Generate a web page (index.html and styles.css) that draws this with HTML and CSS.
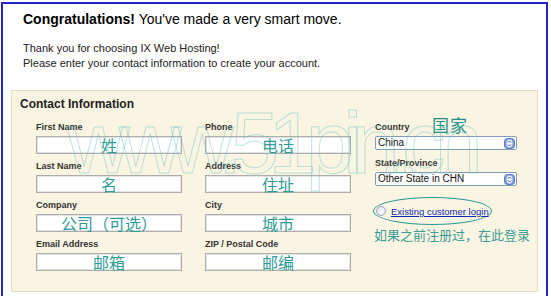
FILE: index.html
```html
<!DOCTYPE html>
<html lang="en">
<head>
    <meta charset="UTF-8">
    <title>Contact Information</title>
    <link rel="stylesheet" href="styles.css">
</head>
<body>

    <div class="page">
        <h1 class="title"><b>Congratulations!</b> You've made a very smart move.</h1>
        <p class="intro">Thank you for choosing IX Web Hosting!<br>Please enter your contact information to create your account.</p>

        <div class="panel">
            <h2>Contact Information</h2>
            <div class="form">
                <div class="col">
                    <div class="field"><label>First Name</label><div class="input">姓</div></div>
                    <div class="field"><label>Last Name</label><div class="input">名</div></div>
                    <div class="field"><label>Company</label><div class="input">公司（可选）</div></div>
                    <div class="field"><label>Email Address</label><div class="input">邮箱</div></div>
                </div>
                <div class="col">
                    <div class="field"><label>Phone</label><div class="input">电话</div></div>
                    <div class="field"><label>Address</label><div class="input">住址</div></div>
                    <div class="field"><label>City</label><div class="input">城市</div></div>
                    <div class="field"><label>ZIP / Postal Code</label><div class="input">邮编</div></div>
                </div>
                <div class="col side">
                    <div class="pick">
                        <label>Country <span class="note">国家</span></label>
                        <div class="select">
                            <span>China</span>
                            <svg width="11" height="11" viewBox="0 0 11 11"><rect x="0.5" y="0.5" width="10" height="10" rx="3" fill="#7d9be0" stroke="#5a78c0"/><ellipse cx="5.5" cy="5.5" rx="3" ry="4" fill="#eef3ff"/><path d="M4 4.5 L5.5 3 L7 4.5 M4 6.5 L5.5 8 L7 6.5" fill="none" stroke="#3b5ba8" stroke-width="1"/></svg>
                        </div>
                    </div>
                    <div class="pick">
                        <label>State/Province</label>
                        <div class="select">
                            <span>Other State in CHN</span>
                            <svg width="11" height="11" viewBox="0 0 11 11"><rect x="0.5" y="0.5" width="10" height="10" rx="3" fill="#7d9be0" stroke="#5a78c0"/><ellipse cx="5.5" cy="5.5" rx="3" ry="4" fill="#eef3ff"/><path d="M4 4.5 L5.5 3 L7 4.5 M4 6.5 L5.5 8 L7 6.5" fill="none" stroke="#3b5ba8" stroke-width="1"/></svg>
                        </div>
                    </div>
                    <div class="login">
                        <span class="ring"><span class="radio"></span><a href="#">Existing customer login</a></span>
                    </div>
                    <p class="hint">如果之前注册过，在此登录</p>
                </div>
            </div>
        </div>

        <div class="mark">www.51pin.cn</div>
    </div>

</body>
</html>
```

FILE: styles.css
```css
* {
    box-sizing: border-box;
}
body {
    font-family: 'Liberation Sans', Arial, sans-serif;
    background-color: white;
    margin: 0;
    padding: 0;
}
.page {
    position: relative;
    height: 300px;
    margin: 2px 3px 0 1px;
    border: 2px solid #2323c8;
    border-bottom: none;
    padding-top: 7px;
    overflow: hidden;
}
.title {
    margin: 0;
    padding-left: 20px;
    font-size: 14px;
    line-height: 16px;
    font-weight: normal;
    color: #000;
}
.intro {
    margin: 14px 0 0;
    padding-left: 20px;
    font-size: 11px;
    line-height: 15px;
    color: #222;
}
.panel {
    margin: 19px 8px 0;
    padding: 6px 8px 20px;
    background-color: #faf5e2;
    border: 1px solid #e6dfbf;
}
h2 {
    margin: 0;
    font-size: 12px;
    line-height: 14px;
    color: #222;
}
.form {
    display: grid;
    grid-template-columns: 169px 170px 142px;
    margin-top: 10px;
    padding-left: 16px;
}
.col {
    display: flex;
    flex-direction: column;
    gap: 6px;
}
label {
    display: block;
    position: relative;
    font-size: 9px;
    line-height: 12px;
    font-weight: bold;
    color: #333;
}
.field label {
    margin-bottom: 3px;
}
.input {
    width: 146px;
    height: 18px;
    background-color: white;
    border: 1px solid #adadad;
    box-shadow: inset 0 0 0 1px #e4e4e4;
    font-family: 'Noto Sans CJK SC', sans-serif;
    font-size: 16px;
    line-height: 16px;
    color: #2e9c95;
    text-align: center;
    white-space: nowrap;
}
.side {
    gap: 0;
}
.pick {
    margin-bottom: 7px;
}
.pick label {
    margin-bottom: 3px;
}
.note {
    position: absolute;
    left: 57px;
    top: -5px;
    font-family: 'Noto Sans CJK SC', sans-serif;
    font-size: 17px;
    line-height: 17px;
    font-weight: normal;
    color: #1f9088;
    letter-spacing: 1px;
}
.select {
    display: flex;
    justify-content: space-between;
    align-items: center;
    width: 142px;
    height: 14px;
    padding: 0 1px 0 2px;
    background-color: white;
    border: 1px solid #7f9db9;
    border-radius: 2px;
    font-size: 10px;
    line-height: 12px;
    color: #111;
}
.login {
    margin: 4px 0 0 -2px;
}
.ring {
    display: inline-flex;
    align-items: center;
    width: 119px;
    height: 28px;
    padding-left: 2px;
    border: 1px solid #2a9a95;
    border-radius: 50%;
}
.radio {
    width: 10px;
    height: 10px;
    margin-right: 5px;
    border: 1px solid #9aa6bd;
    border-radius: 50%;
    background: radial-gradient(circle at 60% 60%, #ffffff, #d6dbe6);
}
.ring a {
    font-size: 9.5px;
    color: #1028b0;
}
.hint {
    margin: 2px 0 0 -1px;
    font-family: 'Noto Sans CJK SC', sans-serif;
    font-size: 13px;
    line-height: 16px;
    color: #3d9c94;
    white-space: nowrap;
}
.mark {
    position: absolute;
    left: 64px;
    top: 95px;
    font-size: 87px;
    line-height: 87px;
    letter-spacing: -11px;
    color: transparent;
    -webkit-text-stroke: 1px rgba(110, 195, 195, 0.45);
    pointer-events: none;
    white-space: nowrap;
}
```
